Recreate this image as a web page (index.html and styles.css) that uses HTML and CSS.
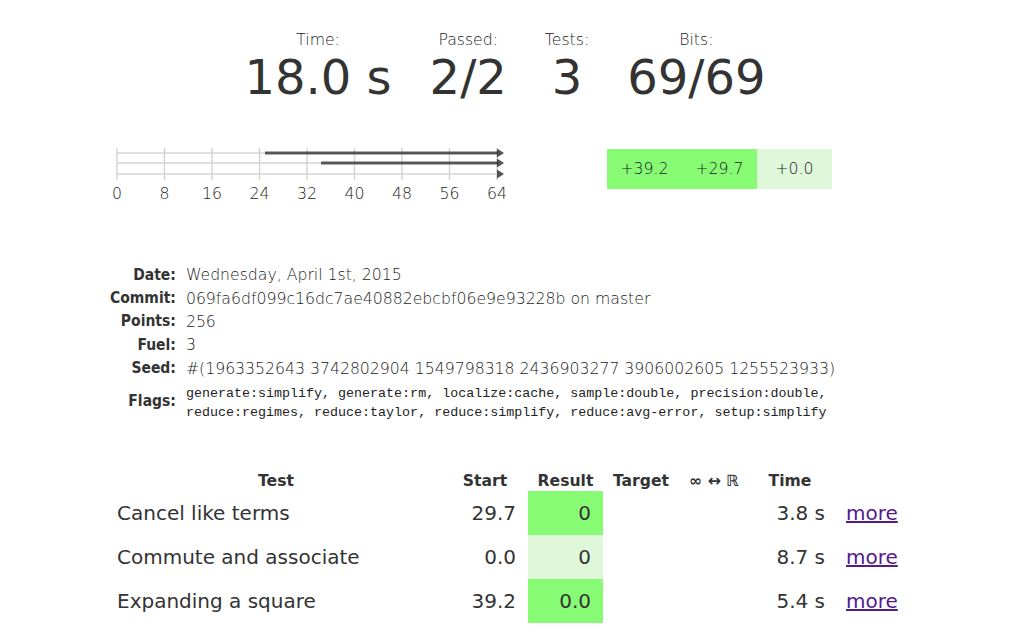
FILE: index.html
```html
<!DOCTYPE html>
<html>
<head>
<meta charset="utf-8">
<title>Herbie results</title>
<link rel="stylesheet" href="styles.css">
</head>
<body>
<div class="stats">
  <div class="stat"><div class="stat-label">Time:</div><div class="stat-value">18.0 s</div></div>
  <div class="stat"><div class="stat-label">Passed:</div><div class="stat-value">2/2</div></div>
  <div class="stat"><div class="stat-label">Tests:</div><div class="stat-value">3</div></div>
  <div class="stat"><div class="stat-label">Bits:</div><div class="stat-value">69/69</div></div>
</div>

<div class="figures">
  <div class="arrows">
    <svg class="arrow-svg" width="400" height="50" viewBox="0 0 400 50">
      <g stroke="#d4d4d4" stroke-width="1.5">
        <line x1="7" y1="13" x2="387" y2="13"/>
        <line x1="7" y1="23" x2="387" y2="23"/>
        <line x1="7" y1="34" x2="387" y2="34"/>
        <line x1="7" y1="8" x2="7" y2="40"/>
        <line x1="54.5" y1="8" x2="54.5" y2="40"/>
        <line x1="102" y1="8" x2="102" y2="40"/>
        <line x1="149.5" y1="8" x2="149.5" y2="40"/>
        <line x1="197" y1="8" x2="197" y2="40"/>
        <line x1="244.5" y1="8" x2="244.5" y2="40"/>
        <line x1="292" y1="8" x2="292" y2="40"/>
        <line x1="339.5" y1="8" x2="339.5" y2="40"/>
        <line x1="387" y1="8" x2="387" y2="40"/>
      </g>
      <g stroke="rgba(40,40,40,0.75)" stroke-width="3">
        <line x1="155" y1="13" x2="388" y2="13"/>
        <line x1="211" y1="23" x2="388" y2="23"/>
      </g>
      <g fill="rgba(40,40,40,0.8)">
        <path d="M387 8.5 L394 13 L387 17.5 Z"/>
        <path d="M387 18.5 L394 23 L387 27.5 Z"/>
        <path d="M387 29.5 L394 34 L387 38.5 Z"/>
      </g>
    </svg>
    <div class="ticks">
      <span>0</span><span>8</span><span>16</span><span>24</span><span>32</span><span>40</span><span>48</span><span>56</span><span>64</span>
    </div>
  </div>
  <div class="bars">
    <div class="bar good">+39.2</div>
    <div class="bar good">+29.7</div>
    <div class="bar ok">+0.0</div>
  </div>
</div>

<table class="info">
  <tr><th>Date:</th><td>Wednesday, April 1st, 2015</td></tr>
  <tr><th>Commit:</th><td>069fa6df099c16dc7ae40882ebcbf06e9e93228b on master</td></tr>
  <tr><th>Points:</th><td>256</td></tr>
  <tr><th>Fuel:</th><td>3</td></tr>
  <tr><th>Seed:</th><td>#(1963352643 3742802904 1549798318 2436903277 3906002605 1255523933)</td></tr>
  <tr><th>Flags:</th><td class="flags">generate:simplify, generate:rm, localize:cache, sample:double, precision:double,<br>reduce:regimes, reduce:taylor, reduce:simplify, reduce:avg-error, setup:simplify</td></tr>
</table>

<table class="results">
  <thead>
    <tr>
      <th class="c-test">Test</th>
      <th class="c-start">Start</th>
      <th class="c-result">Result</th>
      <th class="c-target">Target</th>
      <th class="c-inf">∞ ↔ ℝ</th>
      <th class="c-time">Time</th>
      <th class="c-more"></th>
    </tr>
  </thead>
  <tbody>
    <tr>
      <td class="c-test">Cancel like terms</td>
      <td class="c-start">29.7</td>
      <td class="c-result good">0</td>
      <td class="c-target"></td>
      <td class="c-inf"></td>
      <td class="c-time">3.8 s</td>
      <td class="c-more"><a href="#">more</a></td>
    </tr>
    <tr>
      <td class="c-test">Commute and associate</td>
      <td class="c-start">0.0</td>
      <td class="c-result ok">0</td>
      <td class="c-target"></td>
      <td class="c-inf"></td>
      <td class="c-time">8.7 s</td>
      <td class="c-more"><a href="#">more</a></td>
    </tr>
    <tr>
      <td class="c-test">Expanding a square</td>
      <td class="c-start">39.2</td>
      <td class="c-result good">0.0</td>
      <td class="c-target"></td>
      <td class="c-inf"></td>
      <td class="c-time">5.4 s</td>
      <td class="c-more"><a href="#">more</a></td>
    </tr>
  </tbody>
</table>
</body>
</html>
```

FILE: styles.css
```css
html, body {
  margin: 0;
  padding: 0;
  background: #fff;
}
body {
  font-family: "DejaVu Sans", sans-serif;
  color: #333;
}

.stats {
  display: flex;
  justify-content: center;
  gap: 38px;
  padding-top: 31px;
}
.stat {
  text-align: center;
}
.stat-label {
  font-size: 15.7px;
  font-weight: 200;
  line-height: 18px;
  color: #222;
}
.stat-value {
  font-size: 48px;
  font-weight: 400;
  line-height: 57px;
}

.figures {
  display: flex;
  align-items: flex-start;
  padding-left: 110px;
  margin-top: 34px;
  gap: 97px;
}
.arrows {
  width: 400px;
}
.arrow-svg {
  display: block;
}
.ticks {
  display: flex;
  justify-content: space-between;
  width: 414px;
  margin-left: -10px;
  margin-top: -6px;
  font-size: 15.7px;
  font-weight: 200;
  color: #222;
}
.ticks span {
  width: 34px;
  text-align: center;
}
.bars {
  display: flex;
  margin-top: 9px;
}
.bar {
  width: 75px;
  height: 40px;
  line-height: 40px;
  text-align: center;
  font-size: 15.7px;
  font-weight: 200;
  color: #222;
}
.good { background: #88fb74; }
.ok { background: #e0f8da; }

.info {
  border-collapse: collapse;
  margin-top: 60px;
  margin-left: 110px;
  font-size: 15.7px;
}
.info th {
  text-align: right;
  font-family: "DejaVu Sans Condensed", "DejaVu Sans", sans-serif;
  font-weight: bold;
  font-size: 15.5px;
  padding: 0 10px 0 0;
  height: 23.4px;
  vertical-align: middle;
}
.info td {
  font-weight: 200;
  padding: 0;
  vertical-align: middle;
  color: #222;
}
.info td.flags {
  font-family: "Liberation Mono", monospace;
  font-size: 13.35px;
  line-height: 19px;
  padding-top: 4px;
}

.results {
  border-collapse: collapse;
  table-layout: fixed;
  width: 790px;
  margin-top: 50px;
  margin-left: 110px;
  font-size: 20px;
}
.results th,
.results td {
  box-sizing: border-box;
  padding: 0;
}
.results th {
  font-size: 15.6px;
  font-weight: bold;
  height: 19px;
  text-align: center;
}
.results td {
  height: 44px;
}
.c-test { width: 332px; }
td.c-test { padding-left: 7px; text-align: left; }
.c-start { width: 86px; }
td.c-start { text-align: right; padding-right: 12px; }
.c-result { width: 75px; }
td.c-result { text-align: right; padding-right: 12px; }
.c-target { width: 76px; }
.c-inf { width: 70px; }
.c-time { width: 82px; }
td.c-time { text-align: right; padding-right: 6px; }
.c-more { width: 69px; }
td.c-more { padding-left: 15px; }
.c-more a { color: #551a8b; }
```
